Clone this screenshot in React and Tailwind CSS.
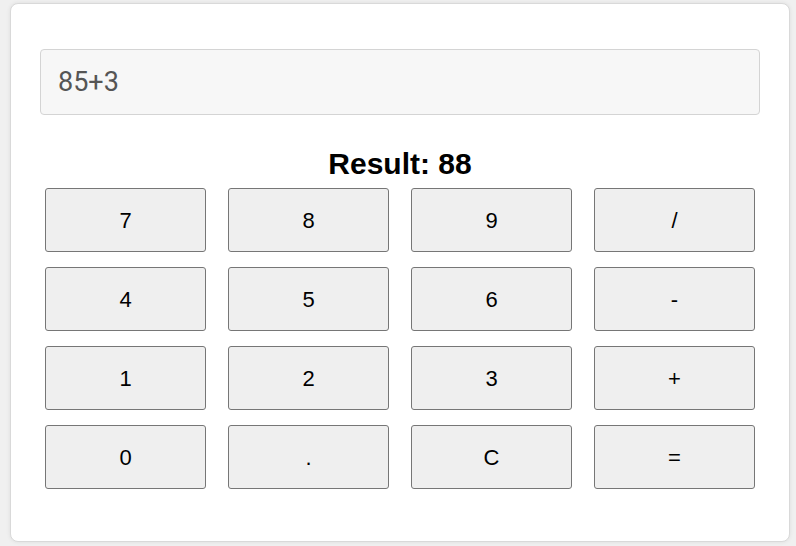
import React, { useState } from 'react';

const keys = ['7', '8', '9', '/', '4', '5', '6', '-', '1', '2', '3', '+', '0', '.', 'C', '='];

const App = () => {
  const [expr, setExpr] = useState('85+3');
  const [result, setResult] = useState('88');

  const press = (k) => {
    if (k === 'C') {
      setExpr('');
      setResult('');
    } else if (k === '=') {
      try {
        // plain arithmetic only
        // eslint-disable-next-line no-new-func
        setResult(String(Function(`return (${expr})`)()));
      } catch (e) {
        setResult('Error');
      }
    } else {
      setExpr(expr + k);
    }
  };

  return (
    <div className="min-h-screen bg-[#f0f0f0] pl-[10px] pt-[3px] font-['Liberation_Sans',Arial,sans-serif]">
      <div className="w-[780px] h-[539px] bg-white border border-[#d9d9d9] rounded-lg shadow-[0_0_4px_rgba(0,0,0,0.08)] px-[29px] pt-[45px]">
        <input
          value={expr}
          onChange={(e) => setExpr(e.target.value)}
          className="block w-full h-[66px] bg-[#f7f7f7] border border-[#d4d4d4] rounded-[4px] px-[17px] text-[27px] text-[#555] font-['Roboto',sans-serif] outline-none"
        />
        <div className="mt-[34px] mb-[9px] h-[30px] leading-none text-center text-[30px] font-bold text-black">
          Result: {result}
        </div>
        <div className="grid grid-cols-4 gap-x-[22px] gap-y-[15px] px-[5px]">
          {keys.map((k) => (
            <button
              key={k}
              onClick={() => press(k)}
              className="h-[64px] bg-[#efefef] border border-[#767676] rounded-[3px] text-[22px] text-black"
            >
              {k}
            </button>
          ))}
        </div>
      </div>
    </div>
  );
};

export default App;
